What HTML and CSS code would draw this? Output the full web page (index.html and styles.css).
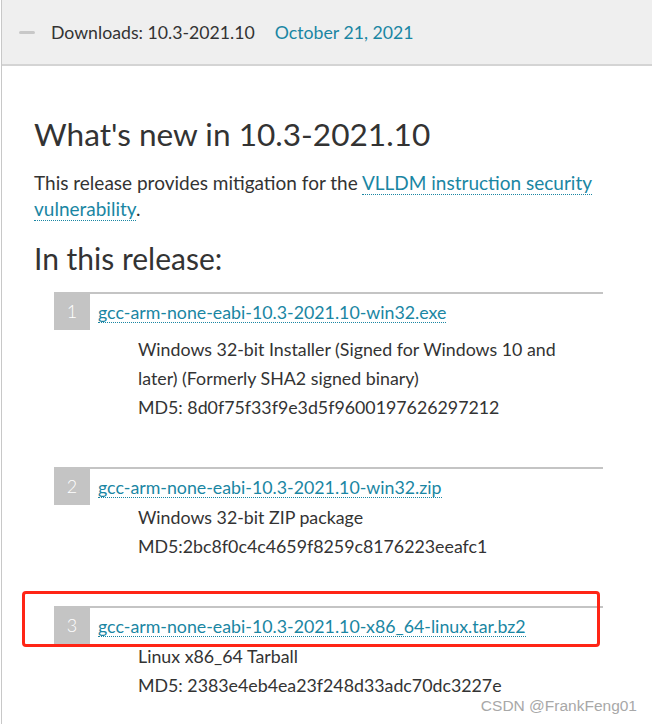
FILE: index.html
```html
<!DOCTYPE html>
<html>
<head>
<meta charset="utf-8">
<link rel="stylesheet" href="styles.css">
</head>
<body>
<div class="panel">
  <div class="panel-head">
    <span class="toggle"></span>
    <span class="head-title">Downloads: 10.3-2021.10</span>
    <span class="head-date">October 21, 2021</span>
  </div>
  <div class="panel-body">
    <h2 class="title">What's new in 10.3-2021.10</h2>
    <p class="intro">This release provides mitigation for the <a class="link" href="#">VLLDM instruction security vulnerability</a>.</p>
    <h3 class="subtitle">In this release:</h3>
    <ol class="files">
      <li class="file">
        <div class="file-head"><span class="num">1</span><a class="link file-link" href="#">gcc-arm-none-eabi-10.3-2021.10-win32.exe</a></div>
        <div class="file-desc file-desc-first">
          <div>Windows 32-bit Installer (Signed for Windows 10 and later) (Formerly SHA2 signed binary)</div>
          <div>MD5: 8d0f75f33f9e3d5f9600197626297212</div>
        </div>
      </li>
      <li class="file">
        <div class="file-head"><span class="num">2</span><a class="link file-link" href="#">gcc-arm-none-eabi-10.3-2021.10-win32.zip</a></div>
        <div class="file-desc">
          <div>Windows 32-bit ZIP package</div>
          <div>MD5:2bc8f0c4c4659f8259c8176223eeafc1</div>
        </div>
      </li>
      <li class="file">
        <div class="file-head"><span class="num">3</span><a class="link file-link" href="#">gcc-arm-none-eabi-10.3-2021.10-x86_64-linux.tar.bz2</a></div>
        <div class="file-desc">
          <div>Linux x86_64 Tarball</div>
          <div>MD5: 2383e4eb4ea23f248d33adc70dc3227e</div>
        </div>
        <div class="highlight"></div>
      </li>
    </ol>
  </div>
</div>
<div class="watermark">CSDN @FrankFeng01</div>
</body>
</html>
```
FILE: styles.css
```css
html, body {
  margin: 0;
  padding: 0;
  background: #fff;
}
body {
  font-family: Lato, "Open Sans", sans-serif;
  color: #333;
  width: 652px;
  height: 724px;
  overflow: hidden;
  position: relative;
}
.panel {
  margin-left: 1px;
  border-left: 1px solid #c8c8c8;
  min-height: 724px;
}
.panel-head {
  height: 64px;
  background: #efefef;
  border-bottom: 2px solid #d4d4d4;
  display: flex;
  align-items: center;
  font-size: 17.7px;
}
.toggle {
  width: 16px;
  height: 3px;
  border-radius: 2px;
  background: #c8c8c8;
  margin-left: 17px;
  margin-right: 16px;
}
.head-title {
  color: #333;
}
.head-date {
  color: #1a86a3;
  margin-left: 20px;
}
.panel-body {
  padding: 0 0 0 32px;
}
.title {
  font-weight: 400;
  font-size: 31.6px;
  margin: 48px 0 0;
  line-height: 40px;
}
.intro {
  font-size: 19px;
  line-height: 26px;
  margin: 16px 0 0;
  width: 580px;
}
.link {
  color: #1a86a3;
  text-decoration: none;
  border-bottom: 1px dotted #1a86a3;
}
.subtitle {
  font-weight: 400;
  font-size: 30px;
  line-height: 36px;
  margin: 18px 0 0;
}
.files {
  list-style: none;
  margin: 16px 0 0 20px;
  padding: 0;
  width: 549px;
}
.file {
  border-top: 2px solid #c4c4c4;
  position: relative;
  margin-bottom: 45px;
}
.file-head {
  display: flex;
  align-items: flex-end;
  margin-top: -2px;
  height: 38px;
}
.num {
  align-self: stretch;
  width: 36px;
  background: #c4c4c4;
  color: #fff;
  font-size: 18px;
  font-weight: 300;
  display: flex;
  align-items: center;
  justify-content: center;
}
.file-link {
  margin-left: 8px;
  margin-bottom: 7px;
  font-size: 17.8px;
  line-height: 20px;
}
.file-desc {
  margin-left: 84px;
  margin-top: -2px;
  font-size: 17.8px;
  line-height: 29px;
}
.file-desc-first {
  margin-top: 0;
  padding-top: 5px;
  width: 430px;
}
.highlight {
  position: absolute;
  left: -32px;
  top: -17px;
  width: 578px;
  height: 56px;
  box-sizing: border-box;
  border: 3px solid #ff2516;
  border-radius: 4px;
}
.watermark {
  position: absolute;
  right: 15px;
  bottom: 9px;
  font-family: "Liberation Sans", Arial, sans-serif;
  font-size: 15.5px;
  color: #a8a8a8;
}
```
